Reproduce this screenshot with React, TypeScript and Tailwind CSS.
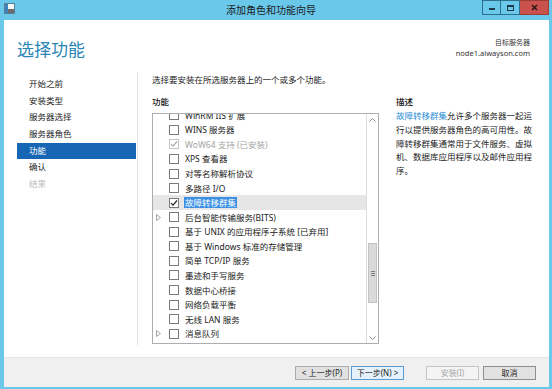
import React from 'react';

type Row = {
  label: string;
  checked?: boolean;
  disabled?: boolean;
  selected?: boolean;
  expand?: boolean;
};

const rows: Row[] = [
  { label: 'WinRM IIS 扩展' },
  { label: 'WINS 服务器' },
  { label: 'WoW64 支持 (已安装)', checked: true, disabled: true },
  { label: 'XPS 查看器' },
  { label: '对等名称解析协议' },
  { label: '多路径 I/O' },
  { label: '故障转移群集', checked: true, selected: true },
  { label: '后台智能传输服务(BITS)', expand: true },
  { label: '基于 UNIX 的应用程序子系统 [已弃用]' },
  { label: '基于 Windows 标准的存储管理' },
  { label: '简单 TCP/IP 服务' },
  { label: '墨迹和手写服务' },
  { label: '数据中心桥接' },
  { label: '网络负载平衡' },
  { label: '无线 LAN 服务' },
  { label: '消息队列', expand: true },
];

const steps = ['开始之前', '安装类型', '服务器选择', '服务器角色', '功能', '确认', '结果'];

function Checkbox({ checked, disabled }: { checked?: boolean; disabled?: boolean }) {
  return (
    <div
      className={`w-[10px] h-[10px] shrink-0 border bg-white flex items-center justify-center ${
        disabled ? 'border-[#c4c4c4]' : 'border-[#7a7a7a]'
      }`}
    >
      {checked && (
        <svg width="8" height="8" viewBox="0 0 8 8">
          <path
            d="M1 4.2 L3 6.2 L7 1.5"
            fill="none"
            stroke={disabled ? '#a8a8a8' : '#222'}
            strokeWidth="1.2"
          />
        </svg>
      )}
    </div>
  );
}

function FeatureRow({ row }: { row: Row }) {
  return (
    <div className={`h-[14.57px] flex items-center shrink-0 ${row.selected ? 'bg-[#e6e6e6]' : ''}`}>
      <div className="w-[16px] shrink-0 flex items-center pl-[3px]">
        {row.expand && (
          <svg width="5" height="7" viewBox="0 0 5 7">
            <path d="M0.5 0.5 L4.5 3.5 L0.5 6.5 Z" fill="none" stroke="#a6a6a6" strokeWidth="1" />
          </svg>
        )}
      </div>
      <Checkbox checked={row.checked} disabled={row.disabled} />
      <span
        className={`ml-[5px] whitespace-nowrap text-[8.5px] leading-[11px] px-[1px] ${
          row.selected ? 'bg-[#3b8fe3] text-white' : row.disabled ? 'text-[#a3a3a3]' : 'text-[#222]'
        }`}
      >
        {row.label}
      </span>
    </div>
  );
}

export default function App() {
  return (
    <div className="w-[552px] h-[389px] bg-[#6ac8eb] flex flex-col overflow-hidden font-['Noto_Sans','Noto_Sans_CJK_SC',sans-serif]">
      {/* Title bar */}
      <div className="h-[20px] shrink-0 flex items-start">
        <div className="pl-[4px] pt-[3px] w-[60px]">
          <svg width="11" height="11" viewBox="0 0 11 11">
            <rect x="0.5" y="0.5" width="10" height="10" fill="#f4f8fb" stroke="#5a7f95" />
            <rect x="1" y="1" width="3" height="9" fill="#3d82b8" />
            <rect x="4" y="6" width="6" height="4" fill="#6b6b6b" />
          </svg>
        </div>
        <div className="flex-1 text-center text-[10px] leading-[20px] text-[#1b1b1b]">添加角色和功能向导</div>
        <div className="flex items-start w-[70px] pr-[3px] justify-end">
          <div className="w-[19px] h-[15px] border border-[#2f6f8e] bg-[#6ac8eb] flex items-end justify-center pb-[4px]">
            <div className="w-[6px] h-[2px] bg-[#1c3a4a]" />
          </div>
          <div className="w-[19px] h-[15px] border border-l-0 border-[#2f6f8e] bg-[#6ac8eb] flex items-center justify-center">
            <div className="w-[7px] h-[6px] border border-t-2 border-[#1c3a4a]" />
          </div>
          <div className="w-[29px] h-[15px] bg-[#c9534c] border border-l-0 border-[#9d3b36] flex items-center justify-center">
            <svg width="7" height="7" viewBox="0 0 7 7">
              <path d="M1 1 L6 6 M6 1 L1 6" stroke="#2c1a1a" strokeWidth="1.6" />
            </svg>
          </div>
        </div>
      </div>

      {/* Body */}
      <div className="flex-1 ml-[4px] mr-[3px] mb-[2px] bg-white flex flex-col">
        {/* Header */}
        <div className="h-[50px] shrink-0 flex justify-between items-start pl-[13px] pr-[19px] pt-[18px]">
          <div className="mt-[2px] text-[17px] leading-[20px] text-[#2a86b5]">选择功能</div>
          <div className="text-right text-[#333]">
            <div className="text-[7px] leading-[10px]">目标服务器</div>
            <div className="text-[7.5px] leading-[10px]">node1.alwayson.com</div>
          </div>
        </div>

        {/* Main */}
        <div className="h-[287px] shrink-0 flex pt-[2px] pb-[12px]">
          <div className="w-[134px] shrink-0 border-r border-[#e2e2e2] pl-[13px] pt-[4px] flex flex-col">
            {steps.map((s, i) => (
              <div
                key={s}
                className={`w-[119px] h-[16.7px] leading-[16.7px] pl-[12px] text-[8.5px] ${
                  i === 4 ? 'bg-[#1666b4] text-white' : i === 6 ? 'text-[#bdbdbd]' : 'text-[#222]'
                }`}
              >
                {s}
              </div>
            ))}
          </div>

          <div className="flex-1 pl-[14px] pt-[2px] flex flex-col">
            <div className="h-[12px] leading-[12px] text-[8.5px] text-[#222]">选择要安装在所选服务器上的一个或多个功能。</div>
            <div className="mt-[10px] flex gap-[17px]">
              {/* Feature list */}
              <div className="w-[227px] flex flex-col">
                <div className="h-[12px] leading-[12px] text-[8.5px] text-[#111] font-medium">功能</div>
                <div className="mt-[5px] h-[231px] border border-[#abadb3] flex overflow-hidden">
                  <div className="flex-1 flex flex-col overflow-hidden">
                    <div className="-mt-[6px] flex flex-col">
                      {rows.map((r) => (
                        <FeatureRow key={r.label} row={r} />
                      ))}
                    </div>
                  </div>
                  <div className="w-[12px] shrink-0 border-l border-[#dcdcdc] flex flex-col items-center">
                    <div className="h-[11px] flex items-center justify-center">
                      <svg width="7" height="4" viewBox="0 0 7 4">
                        <path d="M0.5 3.5 L3.5 0.5 L6.5 3.5" fill="none" stroke="#8a8a8a" />
                      </svg>
                    </div>
                    <div className="flex-1 w-full flex flex-col">
                      <div className="mt-[118px] h-[60px] mx-[1px] bg-[#dadada] border border-[#c2c2c2] flex flex-col items-center justify-center gap-[1px]">
                        <div className="w-[4px] h-px bg-[#7c7c7c]" />
                        <div className="w-[4px] h-px bg-[#7c7c7c]" />
                        <div className="w-[4px] h-px bg-[#7c7c7c]" />
                      </div>
                    </div>
                    <div className="h-[11px] flex items-center justify-center">
                      <svg width="7" height="4" viewBox="0 0 7 4">
                        <path d="M0.5 0.5 L3.5 3.5 L6.5 0.5" fill="none" stroke="#8a8a8a" />
                      </svg>
                    </div>
                  </div>
                </div>
              </div>

              {/* Description */}
              <div className="flex flex-col">
                <div className="h-[12px] leading-[12px] text-[8.5px] text-[#111] font-medium">描述</div>
                <div className="mt-[1px] text-[8.5px] leading-[13.8px] text-[#222] whitespace-nowrap">
                  <div>
                    <span className="text-[#2b8fd6]">故障转移群集</span>允许多个服务器一起运
                  </div>
                  <div>行以提供服务器角色的高可用性。故</div>
                  <div>障转移群集通常用于文件服务、虚拟</div>
                  <div>机、数据库应用程序以及邮件应用程</div>
                  <div>序。</div>
                </div>
              </div>
            </div>
          </div>
        </div>

        {/* Footer */}
        <div className="h-[30px] shrink-0 bg-[#f0f0f0] border-t border-[#e4e4e4] flex justify-end items-start pt-[8px] pr-[13px] text-[8px]">
          <div className="w-[54px] h-[14px] border border-[#adadad] bg-[#e1e1e1] flex items-center justify-center text-[#222]">&lt; 上一步(P)</div>
          <div className="ml-[2px] w-[53px] h-[14px] border border-[#5b9bd1] bg-[#e5f1fb] flex items-center justify-center text-[#222]">下一步(N) &gt;</div>
          <div className="ml-[22px] w-[53px] h-[14px] border border-[#c6c6c6] bg-[#f4f4f4] flex items-center justify-center text-[#a6a6a6]">安装(I)</div>
          <div className="ml-[4px] w-[53px] h-[14px] border border-[#8e8e8e] bg-[#e1e1e1] flex items-center justify-center text-[#222]">取消</div>
        </div>
      </div>
    </div>
  );
}
